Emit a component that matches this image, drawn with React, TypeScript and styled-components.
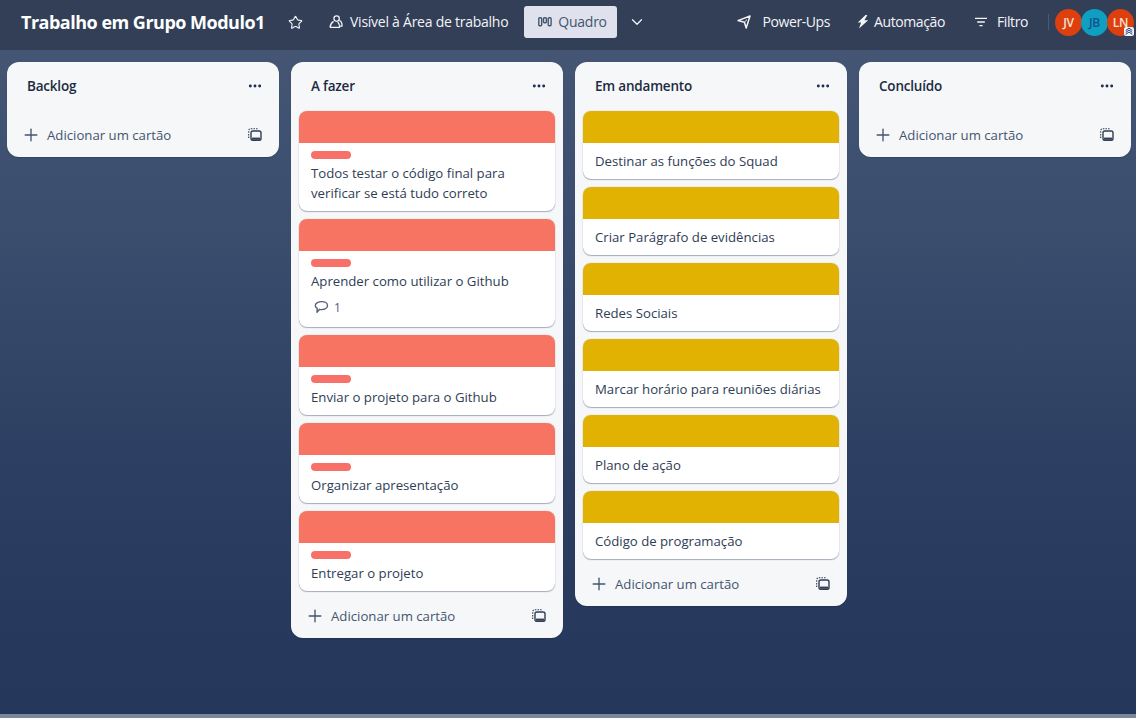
import React from "react";
import styled, { createGlobalStyle } from "styled-components";
import { Star, ChevronDown, Plus, Ellipsis } from "lucide-react";

const Global = createGlobalStyle`
  html, body { margin: 0; padding: 0; height: 100%; }
  body { font-family: "Open Sans", "Noto Sans", sans-serif; overflow: hidden; }
  #root { height: 100%; }
`;

const Page = styled.div`
  width: 1136px;
  height: 718px;
  display: flex;
  flex-direction: column;
  position: relative;
  overflow: hidden;
  background: linear-gradient(180deg, #465875 0%, #3c4e6e 30%, #2c3f62 65%, #24365a 100%);
`;

const Header = styled.header`
  height: 50px;
  flex: none;
  box-sizing: border-box;
  background: #323f57;
  display: flex;
  align-items: center;
  padding: 0 0 6px 21px;
  color: #f2f4f8;
  white-space: nowrap;
`;

const BoardTitle = styled.h1`
  margin: 0;
  font-size: 18px;
  font-weight: 700;
  color: #fff;
  letter-spacing: -0.5px;
  width: 244px;
  line-height: 24px;
  font-family: "Open Sans", sans-serif;
`;

const HeaderText = styled.span`
  font-size: 14px;
  letter-spacing: -0.25px;
  line-height: 20px;
`;

const ActionText = styled(HeaderText)`
  letter-spacing: -0.4px;
`;

const HeaderItem = styled.div<{ $ml: number; $gap: number }>`
  display: flex;
  align-items: center;
  margin-left: ${(p) => p.$ml}px;
  gap: ${(p) => p.$gap}px;
`;

const ViewButton = styled.div`
  margin-left: 16px;
  width: 93px;
  height: 32px;
  box-sizing: border-box;
  background: #dfe2ec;
  border-radius: 3px;
  color: #44546f;
  display: flex;
  align-items: center;
  padding-left: 14px;
  gap: 6px;
`;

const Spacer = styled.div`
  flex: 1;
`;

const Divider = styled.div`
  width: 1px;
  height: 16px;
  background: #4b5a73;
  margin-left: 20px;
`;

const Avatars = styled.div`
  display: flex;
  margin-left: 6px;
  margin-right: 3px;
`;

const Avatar = styled.div<{ $bg: string; $fg: string }>`
  width: 27px;
  height: 27px;
  border-radius: 50%;
  background: ${(p) => p.$bg};
  color: ${(p) => p.$fg};
  font-size: 12px;
  font-weight: 600;
  display: flex;
  align-items: center;
  justify-content: center;
  position: relative;
  margin-right: -1px;
  letter-spacing: -0.2px;
`;

const AdminBadge = styled.div`
  position: absolute;
  right: 0;
  bottom: 0;
  width: 10px;
  height: 9px;
  background: #eef1f7;
  border-radius: 2px;
  display: flex;
  align-items: center;
  justify-content: center;
`;

const BottomStrip = styled.div`
  position: absolute;
  left: 0;
  right: 0;
  bottom: 0;
  height: 4px;
  background: #7b889c;
`;

const Board = styled.main`
  flex: 1;
  display: flex;
  align-items: flex-start;
  gap: 12px;
  padding: 12px 7px 0;
`;

const List = styled.section`
  width: 272px;
  flex: none;
  box-sizing: border-box;
  background: #f6f7f9;
  border-radius: 12px;
  padding: 0 8px;
  box-shadow: 0 1px 1px #091e4240;
`;

const ListHeader = styled.div`
  height: 49px;
  display: flex;
  align-items: center;
  justify-content: space-between;
  padding: 0 8px 2px 12px;
  box-sizing: border-box;
  color: #172b4d;
`;

const ListTitle = styled.h2`
  margin: 0;
  font-size: 13.5px;
  font-weight: 600;
  letter-spacing: -0.2px;
  color: #1c2b42;
`;

const Cards = styled.div`
  display: flex;
  flex-direction: column;
  gap: 8px;
`;

const Card = styled.article`
  background: #fff;
  border-radius: 8px;
  overflow: hidden;
  box-shadow: 0 1px 1px #091e4250, 0 0 1px #091e424f;
`;

const Cover = styled.div<{ $color: string }>`
  height: 32px;
  background: ${(p) => p.$color};
`;

const CardBody = styled.div`
  padding: 8px 12px 8px;
`;

const Label = styled.div`
  width: 40px;
  height: 8px;
  border-radius: 4px;
  background: #f87168;
  margin-bottom: 4px;
`;

const CardTitle = styled.div`
  font-size: 13.2px;
  line-height: 20px;
  color: #2f3d55;
`;

const Badges = styled.div`
  display: flex;
  align-items: center;
  gap: 5px;
  height: 20px;
  margin-top: 6px;
  margin-left: 3px;
  margin-bottom: 2px;
  color: #53617a;
  font-size: 12px;
`;

const AddRow = styled.div<{ $mt: number }>`
  height: 32px;
  margin-top: ${(p) => p.$mt}px;
  margin-bottom: 6px;
  display: flex;
  align-items: center;
  padding: 0 9px 0 6px;
  color: #44546f;
`;

const AddText = styled.span`
  margin-left: 6px;
  font-size: 13.2px;
  color: #44546f;
  flex: 1;
`;

const TemplateIcon = () => (
  <svg width="14" height="14" viewBox="0 0 14 14" fill="none">
    <rect x="3" y="3" width="10" height="9.4" rx="1.8" stroke="#2f3d55" strokeWidth="1.4" />
    <rect x="4" y="9.6" width="8" height="2.2" fill="#2f3d55" />
    <path d="M.7 10V3.2C.7 1.6 1.6.7 3.2.7H10" stroke="#2f3d55" strokeWidth="1.1" strokeDasharray="1.5 1.1" />
  </svg>
);

const BoardIcon = () => (
  <svg width="14" height="10" viewBox="0 0 14 10" fill="none" stroke="currentColor" strokeWidth="1.4">
    <rect x="0.8" y="0.8" width="2.9" height="8" rx="1" />
    <rect x="5.5" y="0.8" width="2.9" height="5" rx="1" />
    <rect x="10.2" y="0.8" width="2.9" height="8" rx="1" />
  </svg>
);

const PeopleIcon = () => (
  <svg width="16" height="16" viewBox="0 0 16 16" fill="none" stroke="currentColor" strokeWidth="1.25" strokeLinejoin="round">
    <circle cx="8.6" cy="4.6" r="2.7" />
    <path d="M2 13.4c.4-3 1.8-5 3.6-6M2 13.4h9.6c.1-2.3-.7-4.2-1.9-5.4" />
    <path d="M11.4 6.4c1.8.8 2.7 3.2 2.7 5.6h-2.4" />
  </svg>
);

const RocketIcon = () => (
  <svg width="14" height="14" viewBox="0 0 14 14" fill="none" stroke="currentColor" strokeWidth="1.5" strokeLinejoin="round">
    <path d="M1 5.6 13 1 9.2 13 7.4 7.2z" />
    <path d="M7.4 7.2 10 4.6" strokeWidth="1" />
  </svg>
);

const BoltIcon = () => (
  <svg width="12" height="14" viewBox="0 0 12 14" fill="currentColor">
    <path d="M8.5 0 .8 7.4h3.3L2 13.6 11.2 5.2H7.4L10.4 0z" />
  </svg>
);

const FilterIcon = () => (
  <svg width="12" height="12" viewBox="0 0 12 12" fill="none" stroke="currentColor" strokeWidth="1.4">
    <path d="M0 2.4h12M2.2 6h7.6M4.4 9.6h3.2" />
  </svg>
);

const CommentIcon = () => (
  <svg width="15" height="14" viewBox="0 0 15 14" fill="none" stroke="currentColor" strokeWidth="1.4" strokeLinejoin="round">
    <path d="M7.8 1.6c3 0 5.7 1.500 5.700 4 0 2.400-2.600 4-5.700 4-.8 0-1.500-.1-2.200-.3L3 12.300l.2-3.900C2 7.700 1.300 6.800 1.300 5.600c0-2.500 3.500-4 6.500-4z" />
  </svg>
);

const ChevronsUp = () => (
  <svg width="8" height="8" viewBox="0 0 9 9" fill="none" stroke="#1f3a7a" strokeWidth="1.1">
    <path d="M.8 4 4.500 1.200 8.200 4M.8 6.200l3.700-2.800 3.700 2.800M.8 8.400l3.700-2.800 3.700 2.800" />
  </svg>
);

type CardData = { title: React.ReactNode; label?: boolean; comments?: number };

const coral = "#f87462";
const yellow = "#e2b203";

const todo: CardData[] = [
  { title: <>Todos testar o código final para<br />verificar se está tudo correto</>, label: true },
  { title: "Aprender como utilizar o Github", label: true, comments: 1 },
  { title: "Enviar o projeto para o Github", label: true },
  { title: "Organizar apresentação", label: true },
  { title: "Entregar o projeto", label: true },
];

const doing: CardData[] = [
  { title: "Destinar as funções do Squad" },
  { title: "Criar Parágrafo de evidências" },
  { title: "Redes Sociais" },
  { title: "Marcar horário para reuniões diárias" },
  { title: "Plano de ação" },
  { title: "Código de programação" },
];

const BoardList = ({ title, cards = [], color = coral }: { title: string; cards?: CardData[]; color?: string }) => (
  <List>
    <ListHeader>
      <ListTitle>{title}</ListTitle>
      <Ellipsis size={16} strokeWidth={2.4} />
    </ListHeader>
    {cards.length > 0 && (
      <Cards>
        {cards.map((c, i) => (
          <Card key={i}>
            <Cover $color={color} />
            <CardBody>
              {c.label && <Label />}
              <CardTitle>{c.title}</CardTitle>
              {c.comments !== undefined && (
                <Badges>
                  <CommentIcon />
                  {c.comments}
                </Badges>
              )}
            </CardBody>
          </Card>
        ))}
      </Cards>
    )}
    <AddRow $mt={cards.length > 0 ? 9 : 8}>
      <Plus size={20} strokeWidth={1.6} />
      <AddText>Adicionar um cartão</AddText>
      <TemplateIcon />
    </AddRow>
  </List>
);

export default function App() {
  return (
    <Page>
      <Global />
      <Header>
        <BoardTitle>Trabalho em Grupo Modulo1</BoardTitle>
        <HeaderItem $ml={23} $gap={0}>
          <Star size={15} strokeWidth={1.8} />
        </HeaderItem>
        <HeaderItem $ml={25} $gap={6}>
          <PeopleIcon />
          <HeaderText>Visível à Área de trabalho</HeaderText>
        </HeaderItem>
        <ViewButton>
          <BoardIcon />
          <HeaderText>Quadro</HeaderText>
        </ViewButton>
        <HeaderItem $ml={11} $gap={0}>
          <ChevronDown size={18} strokeWidth={1.7} />
        </HeaderItem>
        <Spacer />
        <HeaderItem $ml={0} $gap={11}>
          <RocketIcon />
          <ActionText>Power-Ups</ActionText>
        </HeaderItem>
        <HeaderItem $ml={27} $gap={5}>
          <BoltIcon />
          <ActionText>Automação</ActionText>
        </HeaderItem>
        <HeaderItem $ml={30} $gap={10}>
          <FilterIcon />
          <ActionText>Filtro</ActionText>
        </HeaderItem>
        <Divider />
        <Avatars>
          <Avatar $bg="#dd3f0e" $fg="#f8e3d2">JV</Avatar>
          <Avatar $bg="#0e9fc1" $fg="#134f8c">JB</Avatar>
          <Avatar $bg="#dd3f0e" $fg="#f8e3d2">
            LN
            <AdminBadge><ChevronsUp /></AdminBadge>
          </Avatar>
        </Avatars>
      </Header>
      <Board>
        <BoardList title="Backlog" />
        <BoardList title="A fazer" cards={todo} />
        <BoardList title="Em andamento" cards={doing} color={yellow} />
        <BoardList title="Concluído" />
      </Board>
      <BottomStrip />
    </Page>
  );
}
